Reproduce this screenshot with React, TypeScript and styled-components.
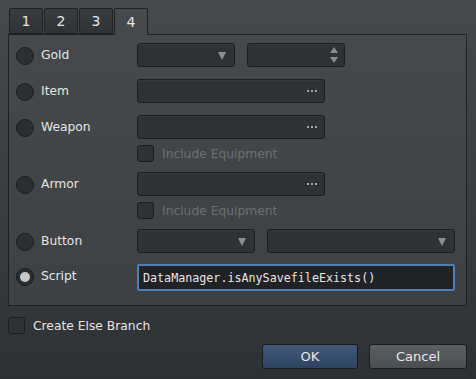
import React from "react";
import styled, { createGlobalStyle } from "styled-components";

const GlobalStyle = createGlobalStyle`
  html, body {
    margin: 0;
    padding: 0;
  }
  body {
    width: 476px;
    height: 379px;
    overflow: hidden;
    font-family: "DejaVu Sans", "Noto Sans", sans-serif;
    font-size: 12px;
    color: #dcdcdc;
  }
`;

const Window = styled.div`
  width: 476px;
  height: 379px;
  box-sizing: border-box;
  padding: 8px 9px 0 8px;
  background: linear-gradient(#46494c, #3a3d40 55%, #2e3134);
  display: flex;
  flex-direction: column;
`;

const TabBar = styled.div`
  display: flex;
  height: 26px;
  padding-left: 1px;
`;

const Tab = styled.div<{ $active?: boolean }>`
  width: 34px;
  height: ${(p) => (p.$active ? "27px" : "26px")};
  box-sizing: border-box;
  margin-right: 1px;
  border: 1px solid #1f2123;
  border-bottom: ${(p) => (p.$active ? "none" : "1px solid #1f2123")};
  border-radius: 2px 2px 0 0;
  background: ${(p) =>
    p.$active ? "#46494c" : "linear-gradient(#3a3d40, #2f3235)"};
  display: flex;
  align-items: center;
  justify-content: center;
  font-size: 14px;
  color: #e4e4e4;
  position: relative;
  z-index: ${(p) => (p.$active ? 1 : 0)};
`;

const Panel = styled.div`
  width: 459px;
  box-sizing: border-box;
  border: 1px solid #1f2123;
  background: linear-gradient(#46494c, #3e4144);
  padding: 8px 12px 14px 7px;
  display: flex;
  flex-direction: column;
`;

const Row = styled.div<{ $mt?: number }>`
  display: grid;
  grid-template-columns: 121px 1fr;
  margin-top: ${(p) => p.$mt ?? 0}px;
`;

const Choice = styled.div`
  height: 24px;
  display: flex;
  align-items: center;
  gap: 7px;
`;

const Radio = styled.span<{ $checked?: boolean }>`
  width: 18px;
  height: 18px;
  box-sizing: border-box;
  border-radius: 50%;
  border: 1px solid #1b1d1f;
  background: #2c2f32;
  display: flex;
  align-items: center;
  justify-content: center;
  margin-top: 1px;
  &::after {
    content: "";
    display: ${(p) => (p.$checked ? "block" : "none")};
    width: 10px;
    height: 10px;
    border-radius: 50%;
    background: #c9c9c9;
  }
`;

const Label = styled.span`
  color: #e4e4e4;
  font-size: 12.3px;
`;

const Controls = styled.div`
  display: flex;
  flex-direction: column;
`;

const FieldLine = styled.div`
  display: flex;
  gap: 12px;
`;

const Field = styled.div<{ $w: number }>`
  width: ${(p) => p.$w}px;
  height: 24px;
  box-sizing: border-box;
  border: 1px solid #1b1d1f;
  border-radius: 3px;
  background: #2f3235;
  box-shadow: inset 0 1px 0 rgba(255, 255, 255, 0.04);
  display: flex;
  align-items: center;
  justify-content: flex-end;
  padding-right: 8px;
`;

const Arrow = styled.span`
  width: 0;
  height: 0;
  border-left: 4.5px solid transparent;
  border-right: 4.5px solid transparent;
  border-top: 8px solid #8a8d90;
  margin-top: 1px;
`;

const SpinArrows = styled.span`
  display: flex;
  flex-direction: column;
  gap: 4px;
  margin-right: -2px;
`;

const SpinUp = styled.span`
  width: 0;
  height: 0;
  border-left: 4.5px solid transparent;
  border-right: 4.5px solid transparent;
  border-bottom: 6px solid #8a8d90;
`;

const SpinDown = styled.span`
  width: 0;
  height: 0;
  border-left: 4.5px solid transparent;
  border-right: 4.5px solid transparent;
  border-top: 6px solid #8a8d90;
`;

const Dots = styled.span`
  display: flex;
  gap: 2px;
  margin-right: -1px;
`;

const Dot = styled.span`
  width: 2px;
  height: 2px;
  background: #a4a7aa;
`;

const ScriptField = styled.div`
  width: 318px;
  height: 27px;
  box-sizing: border-box;
  border: 2px solid #4d80b0;
  border-radius: 2px;
  background: #202225;
  display: flex;
  align-items: center;
  padding-left: 4px;
  font-family: "DejaVu Sans Mono", "Liberation Mono", monospace;
  font-size: 11.7px;
  color: #e6e6e6;
`;

const CheckLine = styled.div<{ $mt?: number }>`
  height: 17px;
  display: flex;
  align-items: center;
  gap: 8px;
  margin-top: ${(p) => p.$mt ?? 0}px;
`;

const Box = styled.span`
  width: 17px;
  height: 17px;
  box-sizing: border-box;
  border: 1px solid #1b1d1f;
  border-radius: 3px;
  background: #2f3235;
`;

const CheckText = styled.span<{ $disabled?: boolean }>`
  font-size: 12.3px;
  color: ${(p) => (p.$disabled ? "#6b6e71" : "#e4e4e4")};
`;

const Footer = styled.div`
  display: flex;
  flex-direction: column;
  padding-top: 11px;
`;

const Buttons = styled.div`
  display: flex;
  justify-content: flex-end;
  gap: 11px;
  margin-top: 10px;
`;

const Button = styled.button<{ $primary?: boolean }>`
  width: ${(p) => (p.$primary ? "96px" : "98px")};
  height: 25px;
  box-sizing: border-box;
  border: 1px solid #1a1c1e;
  border-radius: 3px;
  background: ${(p) =>
    p.$primary
      ? "linear-gradient(#42597a, #2e4360)"
      : "linear-gradient(#5c5f62, #4b4e51)"};
  color: #e8e8e8;
  font-family: "DejaVu Sans", "Noto Sans", sans-serif;
  font-size: 13px;
  padding: 0;
`;

const Ellipsis: React.FC = () => (
  <Dots>
    <Dot />
    <Dot />
    <Dot />
  </Dots>
);

const App: React.FC = () => {
  return (
    <Window>
      <GlobalStyle />
      <TabBar>
        <Tab>1</Tab>
        <Tab>2</Tab>
        <Tab>3</Tab>
        <Tab $active>4</Tab>
      </TabBar>

      <Panel>
        <Row>
          <Choice>
            <Radio />
            <Label>Gold</Label>
          </Choice>
          <FieldLine>
            <Field $w={98}>
              <Arrow />
            </Field>
            <Field $w={98}>
              <SpinArrows>
                <SpinUp />
                <SpinDown />
              </SpinArrows>
            </Field>
          </FieldLine>
        </Row>

        <Row $mt={12}>
          <Choice>
            <Radio />
            <Label>Item</Label>
          </Choice>
          <Field $w={188}>
            <Ellipsis />
          </Field>
        </Row>

        <Row $mt={12}>
          <Choice>
            <Radio />
            <Label>Weapon</Label>
          </Choice>
          <Controls>
            <Field $w={188}>
              <Ellipsis />
            </Field>
            <CheckLine $mt={6}>
              <Box />
              <CheckText $disabled>Include Equipment</CheckText>
            </CheckLine>
          </Controls>
        </Row>

        <Row $mt={10}>
          <Choice>
            <Radio />
            <Label>Armor</Label>
          </Choice>
          <Controls>
            <Field $w={188}>
              <Ellipsis />
            </Field>
            <CheckLine $mt={6}>
              <Box />
              <CheckText $disabled>Include Equipment</CheckText>
            </CheckLine>
          </Controls>
        </Row>

        <Row $mt={10}>
          <Choice>
            <Radio />
            <Label>Button</Label>
          </Choice>
          <FieldLine>
            <Field $w={118}>
              <Arrow />
            </Field>
            <Field $w={188}>
              <Arrow />
            </Field>
          </FieldLine>
        </Row>

        <Row $mt={11}>
          <Choice>
            <Radio $checked />
            <Label>Script</Label>
          </Choice>
          <ScriptField>DataManager.isAnySavefileExists()</ScriptField>
        </Row>
      </Panel>

      <Footer>
        <CheckLine>
          <Box />
          <CheckText>Create Else Branch</CheckText>
        </CheckLine>
        <Buttons>
          <Button $primary>OK</Button>
          <Button>Cancel</Button>
        </Buttons>
      </Footer>
    </Window>
  );
};

export default App;
